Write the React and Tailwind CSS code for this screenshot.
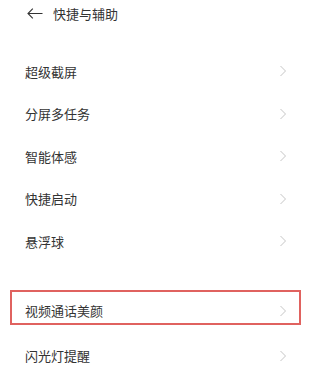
import React from "react";

const font = { fontFamily: '"Noto Sans CJK SC", "Noto Sans", sans-serif' };

function Chevron() {
  return (
    <svg width="8" height="12" viewBox="0 0 8 12" className="shrink-0">
      <path d="M1.5 1 L6.5 6 L1.5 11" fill="none" stroke="#c6c6c6" strokeWidth="1" />
    </svg>
  );
}

function Row({ label }) {
  return (
    <div className="flex h-[42.5px] items-center justify-between pl-[25px] pr-[14px]">
      <span className="text-[13px] leading-none text-[#333333]">{label}</span>
      <Chevron />
    </div>
  );
}

export default function App() {
  return (
    <div className="h-[367px] w-[301px] overflow-hidden bg-white" style={font}>
      <div className="flex h-[26px] items-center pl-[27px]">
        <svg width="16" height="11" viewBox="0 0 16 11" className="shrink-0">
          <path d="M15.5 5.5 H1 M5.8 0.7 L1 5.5 L5.8 10.3" fill="none" stroke="#333333" strokeWidth="1.1" />
        </svg>
        <span className="ml-[10px] text-[13px] leading-none text-[#333333]">快捷与辅助</span>
      </div>
      <div className="mt-[24px]">
        <Row label="超级截屏" />
        <Row label="分屏多任务" />
        <Row label="智能体感" />
        <Row label="快捷启动" />
        <Row label="悬浮球" />
      </div>
      <div className="ml-[10px] mt-[27.5px] flex h-[35px] items-center justify-between border-2 border-[#e0625f] pl-[13px] pr-[12px] pt-[6px]">
        <span className="text-[13px] leading-none text-[#333333]">视频通话美颜</span>
        <Chevron />
      </div>
      <div className="mt-[9.5px]">
        <Row label="闪光灯提醒" />
      </div>
    </div>
  );
}
